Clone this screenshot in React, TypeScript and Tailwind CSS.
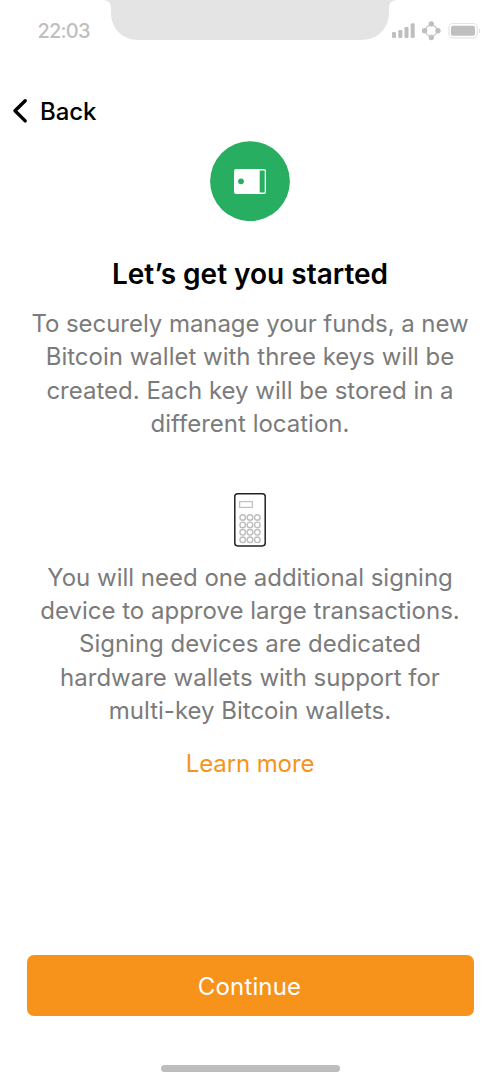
import React from "react";

function Notch() {
  return (
    <svg className="h-10 w-[292px]" viewBox="0 0 292 40" fill="#e4e4e4" aria-hidden="true">
      <path d="M0 0H292C287 0.8 285 3.5 285 8V13C285 29 273 40 257 40H35C19 40 7 29 7 13V8C7 3.5 5 0.8 0 0Z" />
    </svg>
  );
}

function StatusIcons() {
  return (
    <svg className="h-[22px] w-[90px]" viewBox="0 0 90 22" fill="#bfbfbf" aria-hidden="true">
      <rect x="2" y="12" width="4" height="6" rx="1.2" />
      <rect x="8.3" y="10" width="4" height="8" rx="1.2" />
      <rect x="14.5" y="7" width="4" height="11" rx="1.2" />
      <rect x="20.7" y="3.3" width="4" height="14.7" rx="1.2" />
      <circle cx="41.3" cy="10.7" r="5.7" fill="none" stroke="#bfbfbf" strokeWidth="1.1" />
      <circle cx="41.3" cy="3.9" r="2.7" />
      <circle cx="41.3" cy="17.5" r="2.7" />
      <circle cx="34.6" cy="10.7" r="2.7" />
      <circle cx="48" cy="10.7" r="2.7" />
      <rect x="59" y="3.5" width="28.2" height="14.3" rx="4" fill="none" stroke="#e4e4e4" strokeWidth="1.2" />
      <rect x="61" y="5.7" width="24" height="10" rx="1.8" />
      <path d="M88.9 8.2C90.9 9.1 90.9 12.4 88.9 13.3Z" fill="#e0e0e0" />
    </svg>
  );
}

function WalletIcon() {
  return (
    <svg className="h-20 w-20" viewBox="0 0 80 80" aria-hidden="true">
      <circle cx="40" cy="40.2" r="39.9" fill="#27ae60" />
      <rect x="24" y="28" width="32" height="25" rx="2.2" fill="#fff" />
      <rect x="49.7" y="29.5" width="5" height="22" fill="#27ae60" />
      <circle cx="31" cy="40.3" r="2.9" fill="#27ae60" />
    </svg>
  );
}

function DeviceIcon() {
  const columns = [8.7, 16, 23.3];
  const rows = [24.5, 31.9, 39.3, 46.8];
  return (
    <svg className="h-[54px] w-8" viewBox="0 0 32 54" fill="none" aria-hidden="true">
      <rect x="0.8" y="0.8" width="30.4" height="52.1" rx="2.8" stroke="#222" strokeWidth="1.5" />
      <rect x="5.6" y="8.6" width="12.8" height="5.8" stroke="#c2c2c2" strokeWidth="1.3" />
      {rows.map((y) =>
        columns.map((x) => (
          <circle key={`${x}-${y}`} cx={x} cy={y} r="2.8" stroke="#bdbdbd" strokeWidth="1.4" />
        )),
      )}
    </svg>
  );
}

export default function App() {
  return (
    <div className="flex h-[1083px] w-[500px] flex-col overflow-hidden bg-white font-['Inter',sans-serif] text-black">
      <header className="flex h-[60px] items-start">
        <div className="w-[104px] pt-[17px] pl-[37.5px] text-[20px] leading-7 font-medium tracking-[-0.8px] text-[#bfbfbf]">22:03</div>
        <Notch />
        <div className="-ml-[6px] pt-5">
          <StatusIcons />
        </div>
      </header>

      <nav className="flex h-[81px] items-start pt-[34px] pl-3">
        <button type="button" className="flex items-center text-[24px] leading-[36px] font-medium tracking-[-0.1px]">
          <svg className="mr-3 -mt-[2px] h-[26px] w-4" viewBox="0 0 16 26" fill="none" aria-hidden="true">
            <path d="M13.2 2.7L3 12.8L13.2 22.9" stroke="currentColor" strokeWidth="3.4" strokeLinecap="round" strokeLinejoin="round" />
          </svg>
          Back
        </button>
      </nav>

      <main className="flex flex-col items-center text-center">
        <WalletIcon />
        <h1 className="mt-[35px] text-[28px] leading-9 font-semibold">Let’s get you started</h1>
        <p className="mt-[15px] text-[24px] leading-[33.33px] text-[#7b7b7b]">
          <span className="tracking-[-0.05px]">To securely manage your funds, a new</span><br />
          Bitcoin wallet with three keys will be<br />
          created. Each key will be stored in a<br />
          different location.
        </p>
        <div className="mt-[53px]">
          <DeviceIcon />
        </div>
        <p className="mt-[13.4px] text-[24px] leading-[33.33px] text-[#7b7b7b]">
          You will need one additional signing<br />
          device to approve large transactions.<br />
          Signing devices are dedicated<br />
          hardware wallets with support for<br />
          multi-key Bitcoin wallets.
        </p>
        <a href="#" className="mt-[19.6px] text-[24px] leading-[33px] tracking-[-0.1px] text-[#f7931a]">Learn more</a>
      </main>

      <footer className="mt-auto flex flex-col items-center px-[26.5px] pb-[11px]">
        <button type="button" className="h-[61.5px] w-full rounded-[7px] bg-[#f7931a] pt-[2px] pr-[1px] text-[24px] leading-[33px] tracking-[0.15px] text-white">
          Continue
        </button>
        <div className="mt-[49px] h-[7px] w-[179px] rounded-full bg-[#bdbdbd]" />
      </footer>
    </div>
  );
}
